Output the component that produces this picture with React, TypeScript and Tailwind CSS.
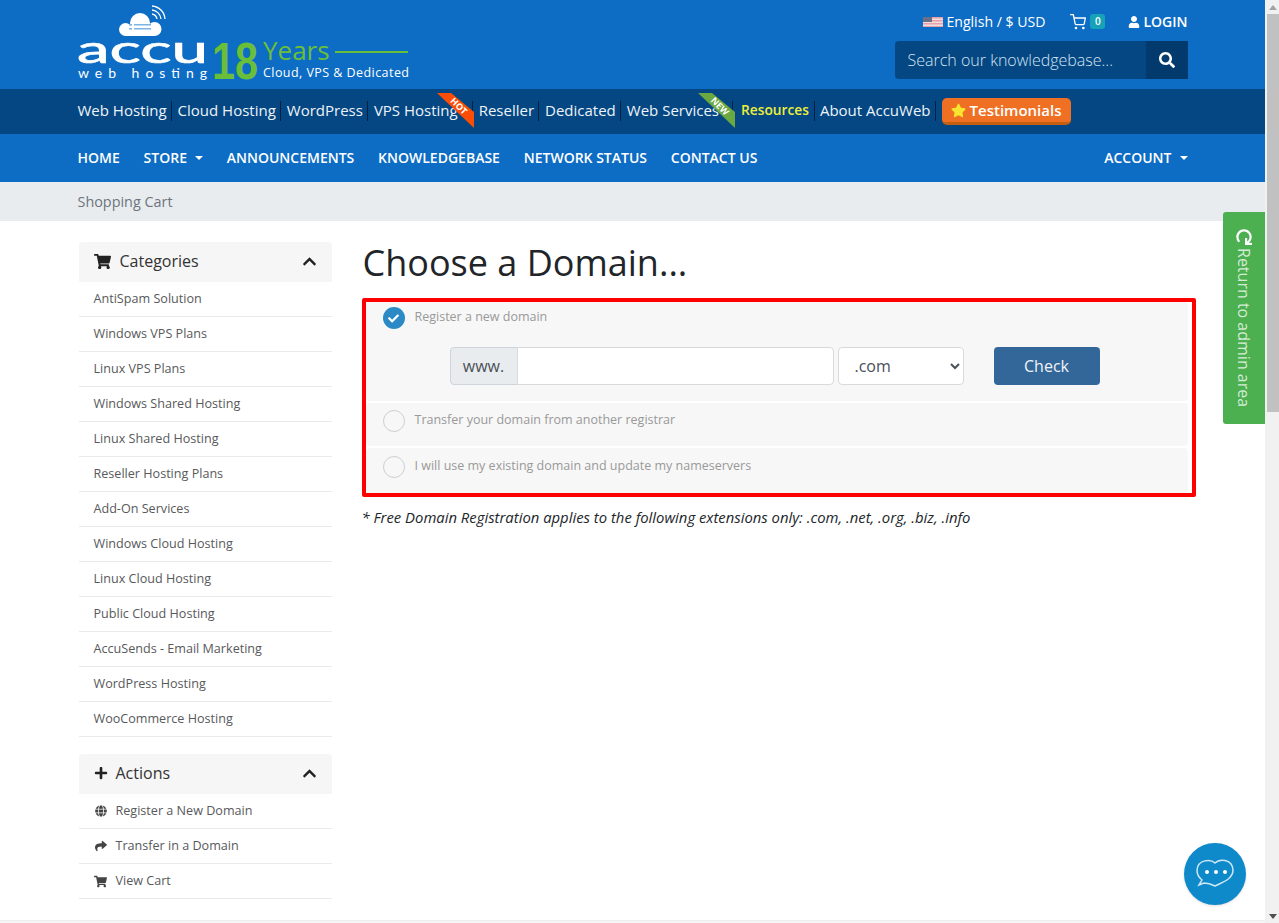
import React from 'react';
import {
  FaChevronUp,
  FaGlobe,
  FaPlus,
  FaRedo,
  FaSearch,
  FaShare,
  FaShoppingCart,
  FaStar,
  FaUser,
  FaCheck,
} from 'react-icons/fa';
import { FiShoppingCart } from 'react-icons/fi';

const categories = [
  'AntiSpam Solution',
  'Windows VPS Plans',
  'Linux VPS Plans',
  'Windows Shared Hosting',
  'Linux Shared Hosting',
  'Reseller Hosting Plans',
  'Add-On Services',
  'Windows Cloud Hosting',
  'Linux Cloud Hosting',
  'Public Cloud Hosting',
  'AccuSends - Email Marketing',
  'WordPress Hosting',
  'WooCommerce Hosting',
];

const Logo = () => (
  <svg width="335" height="80" viewBox="0 0 335 80" className="block overflow-visible">
    <g fill="#fff">
      <circle cx="47.500" cy="24.500" r="6.500" />
      <circle cx="62" cy="18" r="10" />
      <circle cx="76.500" cy="24" r="7" />
      <rect x="47" y="22" width="30" height="9" />
    </g>
    <rect x="51" y="19" width="3" height="1.500" fill="#7db4e6" />
    <rect x="51" y="23" width="3" height="1.500" fill="#7db4e6" />
    <rect x="56" y="19" width="17" height="1.500" fill="#7db4e6" />
    <rect x="56" y="23" width="17" height="1.500" fill="#7db4e6" />
    <g fill="none" stroke="#fff" strokeWidth="1.300">
      <path d="M74 9 a6 6 0 0 1 5 5" />
      <path d="M74 5 a10 10 0 0 1 9 9" />
      <path d="M74 1 a14 14 0 0 1 13 13" />
    </g>
    <text
      x="-1"
      y="57.500"
      textLength="131"
      lengthAdjust="spacingAndGlyphs"
      fontFamily="Lato, sans-serif"
      fontSize="39"
      stroke="#fff"
      strokeWidth="0.700"
      fill="#fff"
    >
      accu
    </text>
    <text x="0" y="73" textLength="129" fontFamily="Lato, sans-serif" fontSize="14" fill="#fff">
      web hosting
    </text>
    <text
      x="134"
      y="74"
      textLength="46"
      lengthAdjust="spacingAndGlyphs"
      fontFamily="'Liberation Sans', sans-serif"
      fontSize="51"
      fontWeight="700"
      fill="#6abf3a"
    >
      18
    </text>
    <text x="185" y="55" fontFamily="'Open Sans', sans-serif" fontSize="26" fill="#6abf3a">
      Years
    </text>
    <rect x="257" y="46" width="73" height="2" fill="#6abf3a" />
    <text
      x="185"
      y="72"
      textLength="146"
      fontFamily="'Open Sans', sans-serif"
      fontSize="12.500"
      fill="#fff"
    >
      Cloud, VPS &amp; Dedicated
    </text>
  </svg>
);

const Flag = () => (
  <svg width="20" height="10" viewBox="0 0 20 10" className="block">
    <rect width="20" height="10" fill="#e8a0a8" />
    <rect y="1.500" width="20" height="1.500" fill="#f3dcdc" />
    <rect y="4.500" width="20" height="1.500" fill="#f3dcdc" />
    <rect y="7.500" width="20" height="1.500" fill="#f3dcdc" />
    <rect width="9" height="5" fill="#6a6f88" />
  </svg>
);

const Ribbon = ({ label, color, left }: { label: string; color: string; left: string }) => (
  <svg width="38" height="35" viewBox="0 0 38 35" className={`absolute top-[-8px] ${left}`}>
    <polygon points="0,0 14,0 37,19 37,35" fill={color} />
    <text
      x="21"
      y="16"
      textAnchor="middle"
      transform="rotate(45 21 14)"
      fontFamily="'Open Sans', sans-serif"
      fontSize="9"
      fontWeight="700"
      fill="#fff"
    >
      {label}
    </text>
  </svg>
);

const Caret = () => (
  <span className="ml-2 inline-block border-x-[4.500px] border-t-[4.500px] border-x-transparent border-t-white align-[3px]" />
);

const TopLink = ({
  children,
  pad,
  gap,
}: {
  children: React.ReactNode;
  pad?: string;
  gap?: string;
}) => (
  <span
    className={`relative flex h-[20px] items-center border-r border-[#02203f] text-[#eef3f8] ${pad ?? 'pr-[4px]'} ${gap ?? 'mr-[6px]'}`}
  >
    {children}
  </span>
);

const SideCard = ({
  icon,
  title,
  children,
}: {
  icon: React.ReactNode;
  title: string;
  children: React.ReactNode;
}) => (
  <div className="w-[253px]">
    <div className="flex h-[40px] items-center rounded-t-[4px] bg-[#f6f6f6] px-[15px] pb-[2px] text-[16px] text-[#333]">
      {icon}
      <span>{title}</span>
      <FaChevronUp className="ml-auto text-[15px] text-[#222]" />
    </div>
    {children}
  </div>
);

const SideItem = ({ children }: { children: React.ReactNode }) => (
  <div className="flex h-[35px] items-center border-b border-[#eaeaea] pl-[15px] text-[12.600px] text-[#58595b]">
    {children}
  </div>
);

const DomainOption = ({
  label,
  checked,
  pad,
}: {
  label: string;
  checked?: boolean;
  pad: string;
}) => (
  <div className={`flex items-start pl-[17px] ${pad}`}>
    {checked ? (
      <span className="flex h-[22px] w-[22px] items-center justify-center rounded-full bg-[#2b8ac6]">
        <FaCheck className="text-[11px] text-white" />
      </span>
    ) : (
      <span className="h-[22px] w-[22px] rounded-full border border-[#cfcfcf] bg-[#f7f7f7]" />
    )}
    <span className="ml-[10px] pt-px text-[12.500px] leading-[18px] text-[#999]">{label}</span>
  </div>
);

export default function App() {
  return (
    <div className="flex h-[923px] overflow-hidden bg-white font-['Open_Sans',sans-serif]">
      <div className="relative flex w-[1265px] flex-col">
        <header className="h-[89px] bg-[#0d6cc4]">
          <div className="mx-auto flex h-full w-[1140px] justify-between px-[15px]">
            <div className="pt-[5px]">
              <Logo />
            </div>
            <div className="flex flex-col items-end">
              <div className="flex h-[41px] items-center pt-[2px] text-[14px] text-white">
                <Flag />
                <span className="ml-[3px] text-[14.100px]">English / $ USD</span>
                <FiShoppingCart className="ml-[25px] text-[16px]" />
                <span className="ml-[4px] flex h-[15px] w-[15px] items-center justify-center rounded-[3px] bg-[#17a2b8] text-[10px] font-semibold">
                  0
                </span>
                <FaUser className="ml-[23px] text-[12px]" />
                <span className="ml-[3px] font-semibold">LOGIN</span>
              </div>
              <div className="flex h-[38px] w-[293px]">
                <div className="flex flex-1 items-center rounded-l-[4px] bg-[#044783] pl-[13px] text-[16px] font-light text-[#d5e3f0]">
                  Search our knowledgebase...
                </div>
                <div className="flex w-[42px] items-center justify-center bg-[#033a6e] text-white">
                  <FaSearch className="text-[16px]" />
                </div>
              </div>
            </div>
          </div>
        </header>

        <nav className="h-[45px] bg-[#044783]">
          <div className="mx-auto flex h-full w-[1140px] items-center px-[15px] pb-[2px] text-[15px]">
            <TopLink>Web Hosting</TopLink>
            <TopLink>Cloud Hosting</TopLink>
            <TopLink>WordPress</TopLink>
            <TopLink pad="pr-[14px]">
              VPS Hosting
              <Ribbon label="HOT" color="#fb4d06" left="left-[63px]" />
            </TopLink>
            <TopLink>Reseller</TopLink>
            <TopLink>Dedicated</TopLink>
            <TopLink pad="pr-[13px]" gap="mr-[8px]">
              Web Services
              <Ribbon label="NEW" color="#6aa842" left="left-[71px]" />
            </TopLink>
            <span className="mr-[5px] flex h-[20px] items-center border-r border-[#02203f] pr-[5px] text-[13.750px] font-semibold text-[#eeee3a]">
              Resources
            </span>
            <TopLink>About AccuWeb</TopLink>
            <div className="flex h-[27px] translate-y-px items-center rounded-[5px] border-b-[3px] border-[#c45e10] bg-[#f07023] pl-[9px] pr-[10px] text-[15px] font-semibold text-white">
              <FaStar className="mr-[4px] text-[15px] text-[#f7e52f]" />
              Testimonials
            </div>
          </div>
        </nav>

        <nav className="h-[48px] bg-[#0d6cc4]">
          <div className="mx-auto flex h-full w-[1140px] items-center gap-[23.800px] px-[15px] pb-[2px] text-[14px] font-semibold text-white">
            <span>HOME</span>
            <span>
              STORE
              <Caret />
            </span>
            <span>ANNOUNCEMENTS</span>
            <span>KNOWLEDGEBASE</span>
            <span>NETWORK STATUS</span>
            <span>CONTACT US</span>
            <span className="ml-auto">
              ACCOUNT
              <Caret />
            </span>
          </div>
        </nav>

        <div className="h-[39px] bg-[#e9ecef]">
          <div className="mx-auto flex h-full w-[1140px] items-center px-[15px] text-[14.400px] text-[#6c757d]">
            Shopping Cart
          </div>
        </div>

        <main className="mx-auto flex h-[699px] w-[1140px] px-[16px] pt-[21px]">
          <aside className="flex w-[253px] flex-col gap-[17px]">
            <SideCard
              title="Categories"
              icon={<FaShoppingCart className="mr-[9px] text-[17px] text-[#222]" />}
            >
              {categories.map((c) => (
                <SideItem key={c}>{c}</SideItem>
              ))}
            </SideCard>
            <SideCard title="Actions" icon={<FaPlus className="mr-[8px] text-[14px] text-[#222]" />}>
              <SideItem>
                <FaGlobe className="ml-[1px] mr-[9px] w-[12px] text-[12px] text-[#444]" />
                Register a New Domain
              </SideItem>
              <SideItem>
                <FaShare className="ml-[1px] mr-[9px] w-[12px] text-[12px] text-[#444]" />
                Transfer in a Domain
              </SideItem>
              <SideItem>
                <FaShoppingCart className="mr-[9px] w-[13px] text-[13px] text-[#444]" />
                View Cart
              </SideItem>
            </SideCard>
          </aside>

          <section className="ml-[30px] flex-1">
            <h1 className="ml-px h-[42px] text-[36px] leading-[42px] text-[#212529]">Choose a Domain...</h1>
            <div className="mt-[14px] flex w-[834px] flex-col gap-[2px] rounded-[2px] border-[4px] border-[#ff0000] pr-[4px]">
              <div className="h-[99px] rounded-[4px] bg-[#f7f7f7]">
                <DomainOption label="Register a new domain" checked pad="pt-[5px]" />
                <div className="ml-[84px] mt-[18px] flex items-start">
                  <span className="flex h-[38px] w-[68px] items-center justify-center rounded-l-[4px] border border-[#ced4da] bg-[#e9ecef] text-[16px] text-[#495057]">
                    www.
                  </span>
                  <input className="-ml-px h-[38px] w-[317px] rounded-r-[4px] border border-[#dadada] bg-white" />
                  <select
                    defaultValue=".com"
                    className="ml-[4px] h-[38px] w-[126px] rounded-[4px] border border-[#dadada] bg-white px-[12px] text-[16px] text-[#495057]"
                  >
                    <option>.com</option>
                  </select>
                  <button className="ml-[30px] h-[38px] w-[106px] rounded-[4px] bg-[#336699] text-[16px] text-[#f0f4f8]">
                    Check
                  </button>
                </div>
              </div>
              <div className="h-[43px] rounded-[4px] bg-[#f7f7f7]">
                <DomainOption label="Transfer your domain from another registrar" pad="pt-[7px]" />
              </div>
              <div className="h-[45px] rounded-[4px] bg-[#f7f7f7]">
                <DomainOption label="I will use my existing domain and update my nameservers" pad="pt-[8px]" />
              </div>
            </div>
            <p className="mt-[9px] text-[14.850px] italic text-[#212529]">
              *&nbsp;Free Domain Registration applies to the following extensions only: .com, .net, .org, .biz, .info
            </p>
          </section>
        </main>

        <footer className="flex-1 border-t border-[#eee] bg-[#f5f5f5]" />

        {/* floating stuff */}
        <div className="absolute left-[1223px] top-[212px] flex h-[212px] w-[42px] flex-col items-center rounded-l-[3px] bg-[#4caf50] pt-[17px] text-[16px] text-[#d4ecd5]">
          <FaRedo className="mb-[3px] rotate-90 text-[16px] text-white" />
          <span className="[writing-mode:vertical-rl]">Return to admin area</span>
        </div>
        <div className="absolute left-[1184px] top-[843px] flex h-[62px] w-[62px] items-center justify-center rounded-full bg-[#0e8acb] shadow-sm">
          <svg width="40" height="34" viewBox="0 0 40 34" fill="none">
            <path
              d="M20 6 C24 2 37 1 38 13 C38 22 28 25 20 29 C16 27 12 26 9 26 L4 28 L7 23 C3 20 2 16 2 13 C3 2 16 2 20 6 Z"
              stroke="#cfe8f6"
              strokeWidth="1.500"
            />
            <circle cx="12" cy="15" r="2" fill="#fff" />
            <circle cx="21" cy="15" r="2" fill="#fff" />
            <circle cx="30" cy="15" r="2" fill="#fff" />
          </svg>
        </div>
      </div>

      <div className="flex w-[14px] flex-col bg-[#f1f1f1]">
        <div className="flex h-[14px] items-center justify-center pl-[2px]">
          <span className="border-x-[4px] border-b-[5px] border-x-transparent border-b-[#a3a3a3]" />
        </div>
        <div className="ml-[2px] h-[398px] bg-[#c1c1c1]" />
        <div className="mt-auto flex h-[14px] items-center justify-center pl-[2px]">
          <span className="border-x-[4px] border-t-[5px] border-x-transparent border-t-[#505050]" />
        </div>
      </div>
    </div>
  );
}
